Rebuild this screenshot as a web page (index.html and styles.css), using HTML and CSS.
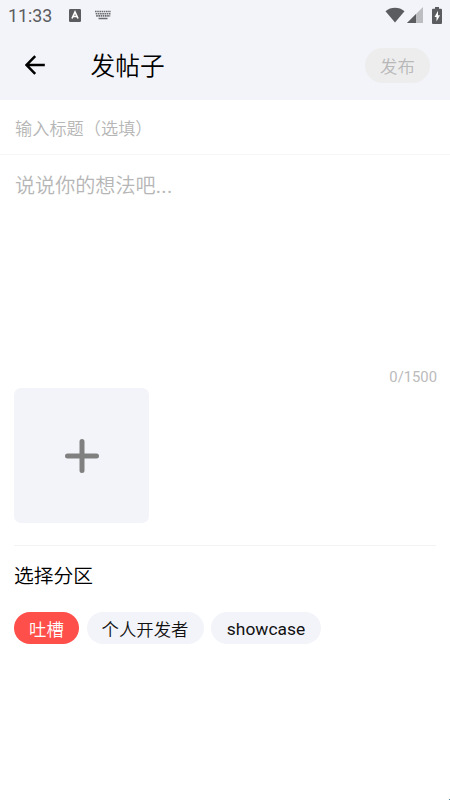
FILE: index.html
```html
<!DOCTYPE html>
<html lang="zh-CN">
<head>
<meta charset="utf-8">
<meta name="viewport" content="width=device-width, initial-scale=1">
<title>发帖子</title>
<link rel="stylesheet" href="styles.css">
</head>
<body>
<div class="screen">
  <header class="top">
    <div class="status">
      <span class="clock">11:33</span>
      <svg class="ic-a" width="12" height="13" viewBox="0 0 12 13"><rect width="12" height="13" rx="1.2" fill="#5b5c60"/><path d="M3 9.500 6 3l3 6.500M4 7.500h4" fill="none" stroke="#fff" stroke-width="1.700"/></svg>
      <svg class="ic-kb" width="16" height="10" viewBox="0 0 16 10"><path d="M0 1.500h16M.7 3.700h15M1.200 5.900h14" fill="none" stroke="#6b6c70" stroke-width="1.600" stroke-dasharray="1.600 .6"/><path d="M3.500 8.500h9" stroke="#6b6c70" stroke-width="1.500"/></svg>
      <svg class="ic-wifi" width="20" height="16" viewBox="0 0 20 16"><path d="M.5 4.200C5.800-.3 14.200-.3 19.500 4.200L10 15.500z" fill="#5b5c60"/></svg>
      <svg class="ic-signal" width="16" height="16" viewBox="0 0 16 16"><path d="M16 0v16H0z" fill="#bcbdc0"/><path d="M9 7v9H0z" fill="#5b5c60"/></svg>
      <svg class="ic-battery" width="10" height="17" viewBox="0 0 10 17"><path d="M3 0h4v1.700h2a1 1 0 0 1 1 1V16a1 1 0 0 1-1 1H1a1 1 0 0 1-1-1V2.700a1 1 0 0 1 1-1h2z" fill="#5b5c60"/><path d="M6 3.800 2.500 10h2v4.500L8 8.300H6z" fill="#fff"/></svg>
    </div>
    <div class="bar">
      <svg class="back" width="20" height="20" viewBox="0 0 20 20"><path d="M19.800 10H2M10.200 1.200 1.600 10l8.600 8.800" fill="none" stroke="#000" stroke-width="2.500"/></svg>
      <h1 class="title">发帖子</h1>
      <button class="publish">发布</button>
    </div>
  </header>
  <main>
    <div class="subject">输入标题（选填）</div>
    <div class="content">说说你的想法吧<span class="dots">...</span></div>
    <div class="count">0/1500</div>
    <div class="upload">
      <svg width="34" height="34" viewBox="0 0 34 34"><path d="M17 2.500v29M2.500 17h29" fill="none" stroke="#808080" stroke-width="5" stroke-linecap="round"/></svg>
    </div>
    <section class="zone">
      <h2 class="zone-title">选择分区</h2>
      <div class="chips">
        <span class="chip chip-topic active">吐槽</span>
        <span class="chip chip-dev">个人开发者</span>
        <span class="chip chip-show">showcase</span>
      </div>
    </section>
  </main>
  <i class="corner"></i>
</div>
</body>
</html>
```
FILE: styles.css
```css
* { box-sizing: border-box; }

body {
  margin: 0;
  background: #fff;
  color: #111;
  font-family: Roboto, "Noto Sans CJK SC", sans-serif;
}

.screen {
  position: relative;
  width: 450px;
  height: 800px;
  overflow: hidden;
}

.top {
  height: 100px;
  background: #f3f4f9;
}

.status {
  display: flex;
  align-items: center;
  height: 30px;
  padding: 0 8px;
}

.clock {
  width: 61px;
  padding-top: 1px;
  font-size: 17.8px;
  line-height: 30px;
  color: #5b5c60;
}

.ic-kb { margin-left: 14px; }
.ic-wifi { margin-left: auto; }
.ic-signal { margin-left: 2px; }
.ic-battery { margin-left: 9px; }

.bar {
  display: flex;
  align-items: center;
  height: 70px;
  padding: 0 20px 0 25px;
}

.title {
  margin: 0 0 0 45.5px;
  padding-top: 4px;
  font-size: 24.7px;
  font-weight: 350;
  line-height: 36px;
  color: #000;
}

.publish {
  width: 65px;
  height: 35px;
  margin-left: auto;
  padding: 1px 0 0;
  border: 0;
  border-radius: 18px;
  background: #ededee;
  color: #b8b8b8;
  font: inherit;
  font-size: 17.4px;
  font-weight: 350;
}

.subject {
  height: 55px;
  padding-left: 15px;
  border-bottom: 1px solid #f6f6f6;
  font-size: 17.2px;
  font-weight: 350;
  line-height: 58px;
  color: #b6b6b6;
}

.content {
  height: 213px;
  padding: 16px 15px;
  font-size: 20.1px;
  font-weight: 350;
  line-height: 30px;
  color: #b6b6b6;
}

.dots {
  font-weight: 400;
  letter-spacing: 0.4px;
}

.count {
  height: 20px;
  padding-right: 13px;
  font-size: 14.8px;
  line-height: 18px;
  text-align: right;
  color: #bbb;
}

.upload {
  display: flex;
  align-items: center;
  justify-content: center;
  width: 135px;
  height: 135px;
  margin-left: 14px;
  border-radius: 7px;
  background: #f3f4f9;
}

.zone {
  margin: 22px 14px 0;
  border-top: 1px solid #f3f3f3;
}

.zone-title {
  margin: 16px 0 20px;
  font-size: 19.8px;
  font-weight: 350;
  line-height: 30px;
  color: #000;
}

.chips {
  display: flex;
  gap: 7.5px;
}

.chip {
  height: 32px;
  border-radius: 16px;
  background: #f3f4f9;
  font-size: 17.4px;
  font-weight: 350;
  line-height: 36px;
  text-align: center;
}

.chip-topic { width: 65px; }
.chip-dev { width: 117px; }
.chip-show { width: 110px; font-weight: 400; line-height: 34px; }

.active {
  background: #ff4f4a;
  color: #fff;
}

.corner {
  position: absolute;
  right: 0;
  bottom: 0;
  width: 1px;
  height: 1px;
  background: #4a80b0;
}
```
